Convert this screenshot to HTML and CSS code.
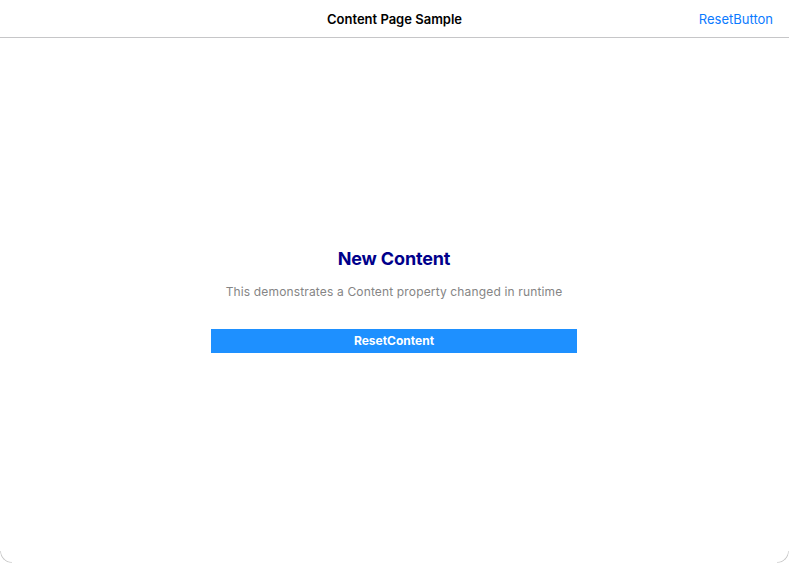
FILE: index.html
```html
<!DOCTYPE html>
<html>
<head>
<meta charset="utf-8">
<link rel="stylesheet" href="styles.css">
</head>
<body>
<div class="window">
  <header class="navbar">
    <div class="nav-side"></div>
    <div class="nav-title">Content Page Sample</div>
    <div class="nav-side nav-right"><span class="nav-button">ResetButton</span></div>
  </header>
  <main class="content">
    <div class="stack">
      <h1 class="heading">New Content</h1>
      <p class="subtitle">This demonstrates a Content property changed in runtime</p>
      <button class="reset">ResetContent</button>
    </div>
  </main>
  <span class="corner corner-left"></span>
  <span class="corner corner-right"></span>
</div>
</body>
</html>
```
FILE: styles.css
```css
html, body {
  margin: 0;
  padding: 0;
  background: #ffffff;
  font-family: Inter, "Noto Sans", sans-serif;
}
.window {
  height: 563px;
  display: flex;
  flex-direction: column;
  box-sizing: border-box;
  position: relative;
  overflow: hidden;
}
.navbar {
  height: 37px;
  border-bottom: 1px solid #c6c6c8;
  display: flex;
  align-items: center;
  padding: 0 16px 0 16px;
  flex-shrink: 0;
}
.nav-side {
  flex: 1;
}
.nav-right {
  display: flex;
  justify-content: flex-end;
}
.nav-title {
  font-size: 13px;
  font-weight: 600;
  color: #000;
}
.nav-button {
  font-size: 13px;
  color: #0a7aff;
}
.content {
  flex: 1;
  display: flex;
  align-items: center;
  justify-content: center;
  padding-right: 1px;
  padding-bottom: 1px;
}
.stack {
  display: flex;
  flex-direction: column;
  align-items: center;
  width: 366px;
}
.heading {
  margin: 0;
  font-size: 18px;
  font-weight: 700;
  color: #00008b;
  line-height: 22px;
  letter-spacing: -0.15px;
}
.subtitle {
  margin: 14px 0 0;
  font-size: 12px;
  color: #858585;
  line-height: 16px;
  letter-spacing: 0.15px;
}
.reset {
  margin-top: 29px;
  width: 366px;
  height: 24px;
  border: none;
  border-radius: 0;
  background: #1e90ff;
  color: #fff;
  font-family: Inter, "Noto Sans", sans-serif;
  font-size: 12px;
  font-weight: 700;
  padding: 0;
}
.corner {
  position: absolute;
  bottom: 0;
  width: 12px;
  height: 12px;
  box-sizing: border-box;
  border-bottom: 1px solid #c8c8c8;
}
.corner-left {
  left: 0;
  border-left: 1px solid #c8c8c8;
  border-bottom-left-radius: 12px;
  mask-image: linear-gradient(45deg, #000 40%, transparent 75%);
}
.corner-right {
  right: 0;
  border-right: 1px solid #c8c8c8;
  border-bottom-right-radius: 12px;
  mask-image: linear-gradient(-45deg, #000 40%, transparent 75%);
}
```
